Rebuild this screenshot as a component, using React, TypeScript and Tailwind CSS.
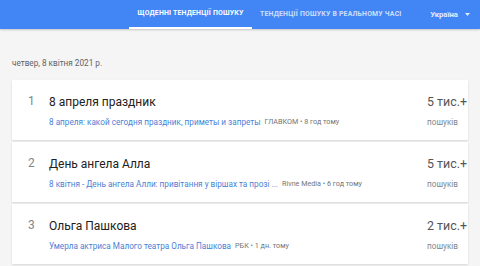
import React from 'react';

const items = [
  {
    rank: 1,
    title: '8 апреля праздник',
    article: '8 апреля: какой сегодня праздник, приметы и запреты',
    source: 'ГЛАВКОМ',
    time: '8 год тому',
    count: '5 тис.+',
  },
  {
    rank: 2,
    title: 'День ангела Алла',
    article: '8 квітня - День ангела Алли: привітання у віршах та прозі ...',
    source: 'Rivne Media',
    time: '6 год тому',
    count: '5 тис.+',
  },
  {
    rank: 3,
    title: 'Ольга Пашкова',
    article: 'Умерла актриса Малого театра Ольга Пашкова',
    source: 'РБК',
    time: '1 дн. тому',
    count: '2 тис.+',
  },
];

export default function App() {
  return (
    <div className="w-[480px] h-[266px] overflow-hidden bg-[#f5f5f5] font-['Roboto',sans-serif]">
      {/* Header */}
      <div className="h-[29px] bg-[#4285f4] flex items-end shadow-[0_1px_2px_rgba(0,0,0,0.2)]">
        <div className="ml-[129px] w-[123px] h-full flex flex-col">
          <div className="flex-1 flex items-center justify-center text-[6.9px] font-bold tracking-[0.2px] text-white">
            ЩОДЕННІ ТЕНДЕНЦІЇ ПОШУКУ
          </div>
          <div className="h-[2px] bg-white" />
        </div>
        <div className="ml-[8px] h-full flex items-center text-[6.9px] font-bold tracking-[0.2px] text-white/75">
          ТЕНДЕНЦІЇ ПОШУКУ В РЕАЛЬНОМУ ЧАСІ
        </div>
        <div className="ml-auto mr-[10px] h-full flex items-center gap-[7px] text-[7.7px] font-bold text-white/85">
          Україна
          <svg width="5" height="3" viewBox="0 0 5 3">
            <path d="M0 0h5L2.5 3z" fill="rgba(255,255,255,0.85)" />
          </svg>
        </div>
      </div>

      {/* Date */}
      <div className="pt-[28px] pl-[12px] text-[8.2px] text-[#5f6368] leading-[12px]">
        четвер, 8 квітня 2021 р.
      </div>

      {/* List */}
      <div className="mt-[11px] mx-[12px] flex flex-col gap-[2px]">
        {items.map((item) => (
          <div
            key={item.rank}
            className="h-[60px] bg-white flex items-center shadow-[0_1px_2px_rgba(0,0,0,0.12)]"
          >
            <div className="w-[37px] pl-[16px] text-[12px] text-[#80868b] -mt-[19px]">{item.rank}</div>
            <div className="flex-1 min-w-0 flex flex-col gap-[5px]">
              <div className="text-[12px] text-[#212121] leading-[18px]">{item.title}</div>
              <div className="flex items-center text-[8.2px] leading-[12px] whitespace-nowrap">
                <span className="text-[#4a7fd6]">{item.article}</span>
                <span className="ml-[4px] text-[#70757a] text-[7.2px]">
                  {item.source} • {item.time}
                </span>
              </div>
            </div>
            <div className="w-[41px] flex flex-col gap-[5px]">
              <div className="text-[12.4px] text-[#555] leading-[18px]">{item.count}</div>
              <div className="text-[8.2px] text-[#80868b] leading-[12px]">пошуків</div>
            </div>
          </div>
        ))}
      </div>
    </div>
  );
}
